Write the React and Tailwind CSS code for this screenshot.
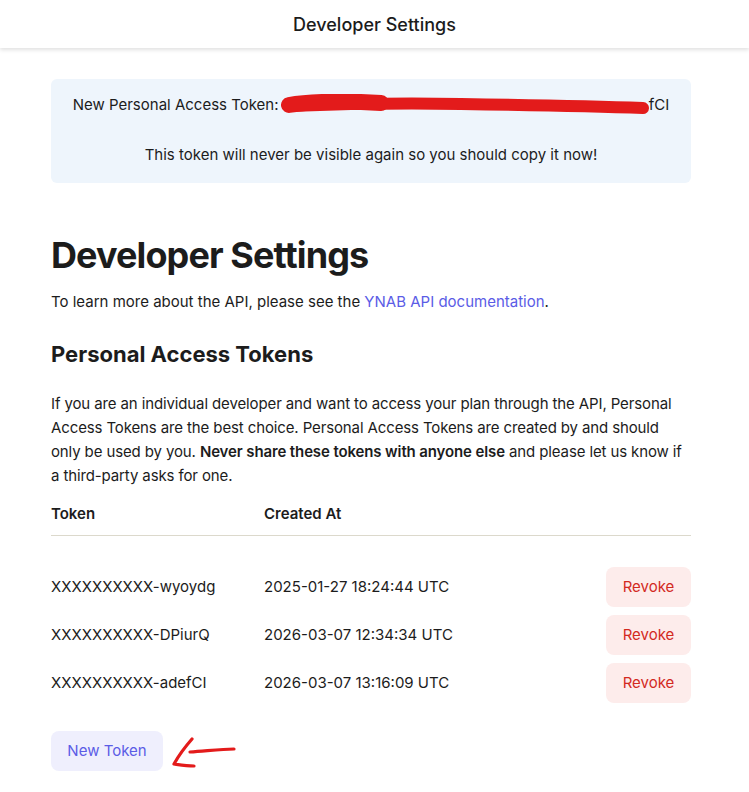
import React from "react";

const tokens = [
  { name: "XXXXXXXXXX-wyoydg", created: "2025-01-27 18:24:44 UTC" },
  { name: "XXXXXXXXXX-DPiurQ", created: "2026-03-07 12:34:34 UTC" },
  { name: "XXXXXXXXXX-adefCI", created: "2026-03-07 13:16:09 UTC" },
];

function Scribble() {
  return (
    <svg width="368" height="24" viewBox="0 0 368 24" className="inline-block align-middle -my-2 -ml-0.5">
      <path
        d="M8 11 C 30 7, 70 7, 100 9"
        stroke="#e31b1b"
        strokeWidth="16"
        strokeLinecap="round"
        fill="none"
      />
      <path
        d="M8 12 C 60 10, 120 9, 180 10 C 240 11, 300 12, 362 14"
        stroke="#e31b1b"
        strokeWidth="12"
        strokeLinecap="round"
        fill="none"
      />
    </svg>
  );
}

function Arrow() {
  return (
    <svg width="70" height="36" viewBox="0 0 70 36" className="ml-2">
      <path d="M19 19 C 35 18, 50 16, 63 16" stroke="#e31b1b" strokeWidth="3.2" strokeLinecap="round" fill="none" />
      <path d="M21 6 C 14 14, 8 22, 3 31 C 10 32, 16 33, 23 33" stroke="#e31b1b" strokeWidth="3.2" strokeLinecap="round" strokeLinejoin="round" fill="none" />
    </svg>
  );
}

export default function App() {
  return (
    <div className="min-h-screen bg-white text-[#1c1c1c]" style={{ fontFamily: "Inter, 'Noto Sans', sans-serif" }}>
      <header className="h-12 flex items-center justify-center shadow-[0_2px_4px_rgba(0,0,0,0.12)]">
        <h2 className="text-[18px] font-medium">Developer Settings</h2>
      </header>

      <main className="w-[640px] ml-[51px] pt-[31px] pb-5">
        <div className="bg-[#eef5fc] rounded-md px-4 pt-[15px] pb-[17px] text-center text-[15px]">
          <p className="leading-[22px] whitespace-nowrap">
            New Personal Access Token: <Scribble />fCI
          </p>
          <p className="mt-7 leading-[22px]">This token will never be visible again so you should copy it now!</p>
        </div>

        <h1 className="mt-[50px] text-[36px] font-bold tracking-tight leading-[44px]">Developer Settings</h1>
        <p className="mt-[13px] text-[15px] leading-6">
          To learn more about the API, please see the{" "}
          <a className="text-[#5b5ce6]">YNAB API documentation</a>.
        </p>

        <h2 className="mt-[26px] text-[22px] font-bold leading-7">Personal Access Tokens</h2>
        <p className="mt-[24px] text-[15px] leading-6 tracking-[-0.008em]">
          If you are an individual developer and want to access your plan through the API, Personal Access Tokens are
          the best choice. Personal Access Tokens are created by and should only be used by you.{" "}
          <strong className="font-semibold">Never share these tokens with anyone else</strong> and please let us know
          if a third-party asks for one.
        </p>

        <table className="mt-[6px] w-full text-[15px]">
          <thead>
            <tr className="border-b border-[#dcd9cc]">
              <th className="w-[213px] text-left font-semibold py-[9px]">Token</th>
              <th className="text-left font-semibold py-[9px]">Created At</th>
              <th></th>
            </tr>
          </thead>
          <tbody>
            <tr>
              <td colSpan={3} className="h-7"></td>
            </tr>
            {tokens.map((t) => (
              <tr key={t.name} className="h-12">
                <td>{t.name}</td>
                <td>{t.created}</td>
                <td className="text-right">
                  <button className="h-10 w-[85px] rounded-lg bg-[#fdeceb] text-[#d32a1f]">Revoke</button>
                </td>
              </tr>
            ))}
          </tbody>
        </table>

        <div className="mt-6 flex items-center">
          <button className="h-10 w-[112px] rounded-lg bg-[#efeffd] text-[#5b5ce6] text-[15px]">
            New Token
          </button>
          <Arrow />
        </div>
      </main>
    </div>
  );
}
